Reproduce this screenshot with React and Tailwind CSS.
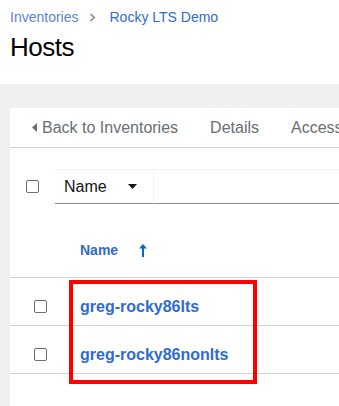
export default function App() {
  const hosts = ['greg-rocky86lts', 'greg-rocky86nonlts']

  return (
    <div className="w-[339px] h-[406px] overflow-hidden bg-[#f0f0f0] font-['Liberation_Sans',Arial,sans-serif]">
      <div className="bg-white h-[84px] px-[10px] pt-[8px]">
        <nav className="flex items-center h-[18px] text-[14px]">
          <span className="text-[#5b84d6]">Inventories</span>
          <svg className="mx-[12px] w-[7px] h-[9px]" viewBox="0 0 7 9">
            <path d="M1 0.5 L5.5 4.5 L1 8.5 L0 7.3 L3.3 4.5 L0 1.7Z" fill="#8a8d90" />
          </svg>
          <span className="text-[#2f6bd2]">Rocky LTS Demo</span>
        </nav>
        <h1 className="mt-[5px] text-[26px] leading-[32px] tracking-[-0.5px] text-black">Hosts</h1>
      </div>

      <div className="pl-[10px] pt-[24px]">
        <div className="relative bg-white w-[600px] h-[320px]">
          <div className="flex items-center h-[40px] border-b border-[#d2d2d2] pl-[22px] text-[16px] text-[#6a6e73]">
            <svg className="w-[5px] h-[9px] mr-[5px]" viewBox="0 0 5 9">
              <path d="M5 0 L0 4.5 L5 9Z" fill="#6a6e73" />
            </svg>
            <span>Back to Inventories</span>
            <span className="ml-[32px]">Details</span>
            <span className="ml-[32px]">Access</span>
          </div>

          <div className="flex items-center pt-[21px] pl-[16px]">
            <span className="w-[13px] h-[13px] border border-[#6a6e73] rounded-[2px]" />
            <div className="ml-[16px] flex items-center w-[98px] h-[35px] border-t border-[#f0f0f0] border-b border-b-[#8a8d90] pl-[9px] text-[16px] text-[#151515]">
              <span>Name</span>
              <svg className="ml-[21px] w-[9px] h-[5px]" viewBox="0 0 9 5">
                <path d="M0 0 L9 0 L4.5 5Z" fill="#151515" />
              </svg>
            </div>
            <div className="flex-1 h-[35px] border-t border-l border-[#f0f0f0] border-b border-b-[#8a8d90]" />
          </div>

          <div className="flex items-center h-[74px] border-b border-[#d2d2d2] pl-[70px] pt-[20px] text-[14px] font-bold text-[#2f6bd2]">
            <span>Name</span>
            <svg className="ml-[21px] w-[8px] h-[13px]" viewBox="0 0 8 13">
              <path d="M4 0 L8 4.5 L5 4.5 L5 13 L3 13 L3 4.5 L0 4.5Z" fill="#0b66d0" />
            </svg>
          </div>

          {hosts.map((h) => (
            <div key={h} className="flex items-center h-[48px] border-b border-[#d2d2d2] pt-[10px]">
              <span className="ml-[24px] w-[13px] h-[13px] border border-[#6a6e73] rounded-[2px]" />
              <span className="ml-[33px] text-[16px] font-bold text-[#2f6bd2]">{h}</span>
            </div>
          ))}

          <div className="absolute left-[59px] top-[172px] w-[188px] h-[104px] border-[4px] border-[#ff0000]" />
        </div>
      </div>
    </div>
  )
}
